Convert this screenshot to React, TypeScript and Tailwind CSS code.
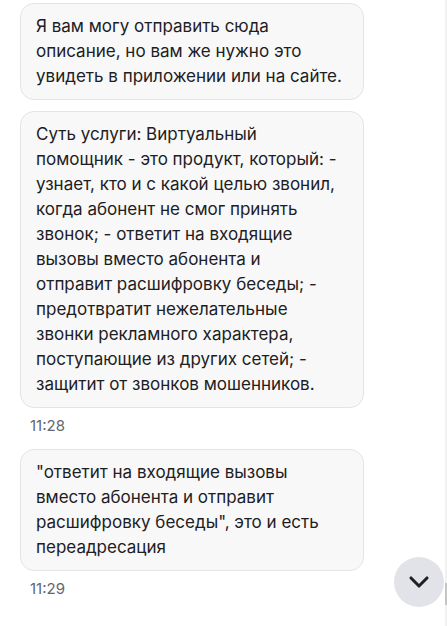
import { ChevronDown } from 'lucide-react'

interface Message {
  id: number
  lines: string[]
  time?: string
}

// lines kept as they wrap in the chat window
const messages: Message[] = [
  {
    id: 1,
    lines: ['Я вам могу отправить сюда', 'описание, но вам же нужно это', 'увидеть в приложении или на сайте.'],
  },
  {
    id: 2,
    lines: [
      'Суть услуги: Виртуальный',
      'помощник - это продукт, который: -',
      'узнает, кто и с какой целью звонил,',
      'когда абонент не смог принять',
      'звонок; - ответит на входящие',
      'вызовы вместо абонента и',
      'отправит расшифровку беседы; -',
      'предотвратит нежелательные',
      'звонки рекламного характера,',
      'поступающие из других сетей; -',
      'защитит от звонков мошенников.',
    ],
    time: '11:28',
  },
  {
    id: 3,
    lines: [
      '"ответит на входящие вызовы',
      'вместо абонента и отправит',
      'расшифровку беседы", это и есть',
      'переадресация',
    ],
    time: '11:29',
  },
]

function Bubble({ message }: { message: Message }) {
  return (
    <div className="flex flex-col">
      <div className="w-[344px] rounded-[14px] border border-[#e4e4e7] bg-[#f8f8f8] px-[15px] py-[10px] text-[17px] leading-[25px] text-[#1d2023]">
        {message.lines.map((line, i) => (
          <span key={i} className="block whitespace-nowrap">
            {line}
          </span>
        ))}
      </div>
      {message.time && (
        <span className="mt-2 mb-[2px] pl-[10px] text-[15px] leading-5 text-[#62666d]">{message.time}</span>
      )}
    </div>
  )
}

export default function App() {
  return (
    <div className="relative flex h-[626px] w-[447px] overflow-hidden bg-white font-['Inter',sans-serif]">
      {/* Messages */}
      <div className="flex flex-1 flex-col gap-[11px] pt-[3px] pl-5">
        {messages.map((m) => (
          <Bubble key={m.id} message={m} />
        ))}
      </div>

      {/* Scrollbar */}
      <div className="flex w-[2px] flex-col bg-[#f1f1f1]">
        <div className="mt-[583px] h-[22px] bg-[#c4c4c4]" />
      </div>

      {/* Scroll down button */}
      <button className="absolute left-[394px] top-[557px] flex h-[50px] w-[50px] items-center justify-center rounded-full bg-[#e2e3e8] text-[#1d2023]">
        <ChevronDown size={32} strokeWidth={2.3} />
      </button>
    </div>
  )
}
